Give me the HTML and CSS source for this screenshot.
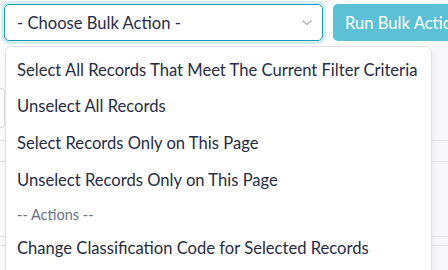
FILE: index.html
```html
<!DOCTYPE html>
<html>
<head>
<meta charset="utf-8">
<link rel="stylesheet" href="styles.css">
</head>
<body>
<div class="page">
  <div class="bg">
    <div class="bg-input"></div>
    <div class="bg-line l1"></div>
    <div class="bg-line l2"></div>
    <div class="bg-line l3"></div>
    <div class="bg-line l4"></div>
  </div>
  <div class="toolbar">
    <div class="select">
      <span class="select-text">- Choose Bulk Action -</span>
      <svg class="chev" width="12" height="8" viewBox="0 0 12 8"><path d="M1.5 1.5 L6 5.5 L10.5 1.5" fill="none" stroke="#a9abb3" stroke-width="1.1"/></svg>
    </div>
    <button class="run">Run Bulk Action</button>
  </div>
  <div class="menu">
    <div class="item">Select All Records That Meet The Current Filter Criteria</div>
    <div class="item">Unselect All Records</div>
    <div class="item">Select Records Only on This Page</div>
    <div class="item">Unselect Records Only on This Page</div>
    <div class="group">-- Actions --</div>
    <div class="item">Change Classification Code for Selected Records</div>
  </div>
</div>
</body>
</html>
```
FILE: styles.css
```css
html, body { margin: 0; padding: 0; }
body {
  width: 448px;
  height: 270px;
  overflow: hidden;
  background: #ffffff;
  font-family: Lato, "Open Sans", sans-serif;
  color: #272c42;
}
.page { position: relative; width: 448px; height: 270px; overflow: hidden; }
.bg { position: absolute; inset: 0; background: linear-gradient(to right, #fff 0, #fff 432px, #f8f8fa 432px); }
.bg-input {
  position: absolute; left: -8px; top: 88px; width: 11px; height: 38px;
  border: 1px solid #dcdde3; border-radius: 4px;
}
.bg-line { position: absolute; left: 0; right: 0; height: 1px; background: #e3e4ea; }
.l1 { top: 140px; }
.l2 { top: 161px; }
.l3 { top: 236px; }
.l4 { top: 245px; }
.toolbar {
  position: relative;
  display: flex;
  gap: 10px;
  padding: 4px 0 0 4px;
}
.select {
  flex: none;
  width: 319px; height: 37px;
  box-sizing: border-box;
  border: 1px solid #1d9db3;
  border-radius: 5px;
  box-shadow: 0 0 0 3px #d5eef3;
  background: #fff;
  display: flex; align-items: center; justify-content: space-between;
  padding: 0 9px 0 12px;
}
.select-text { font-size: 16.6px; color: #272c42; }
.chev { margin-top: 1px; }
.run {
  flex: none;
  height: 37px;
  border: none;
  border-radius: 5px;
  background: #5cc1d5;
  color: #fff;
  font-family: inherit;
  font-size: 16.6px;
  padding: 0 12px;
  white-space: nowrap;
}
.menu {
  position: absolute;
  left: 5px; top: 46px;
  width: 427px; height: 240px;
  box-sizing: border-box;
  background: #fff;
  border: 1px solid #e1e2e8;
  border-radius: 6px;
  box-shadow: 0 3px 10px rgba(30,40,70,0.08);
  padding-top: 4.6px;
}
.item {
  font-size: 16.6px;
  height: 36.7px;
  line-height: 36.7px;
  padding-left: 11px;
  white-space: nowrap;
}
.group {
  font-size: 14.5px;
  color: #6c7185;
  height: 30px;
  line-height: 30px;
  padding-top: 2px;
  padding-left: 11px;
}
```
